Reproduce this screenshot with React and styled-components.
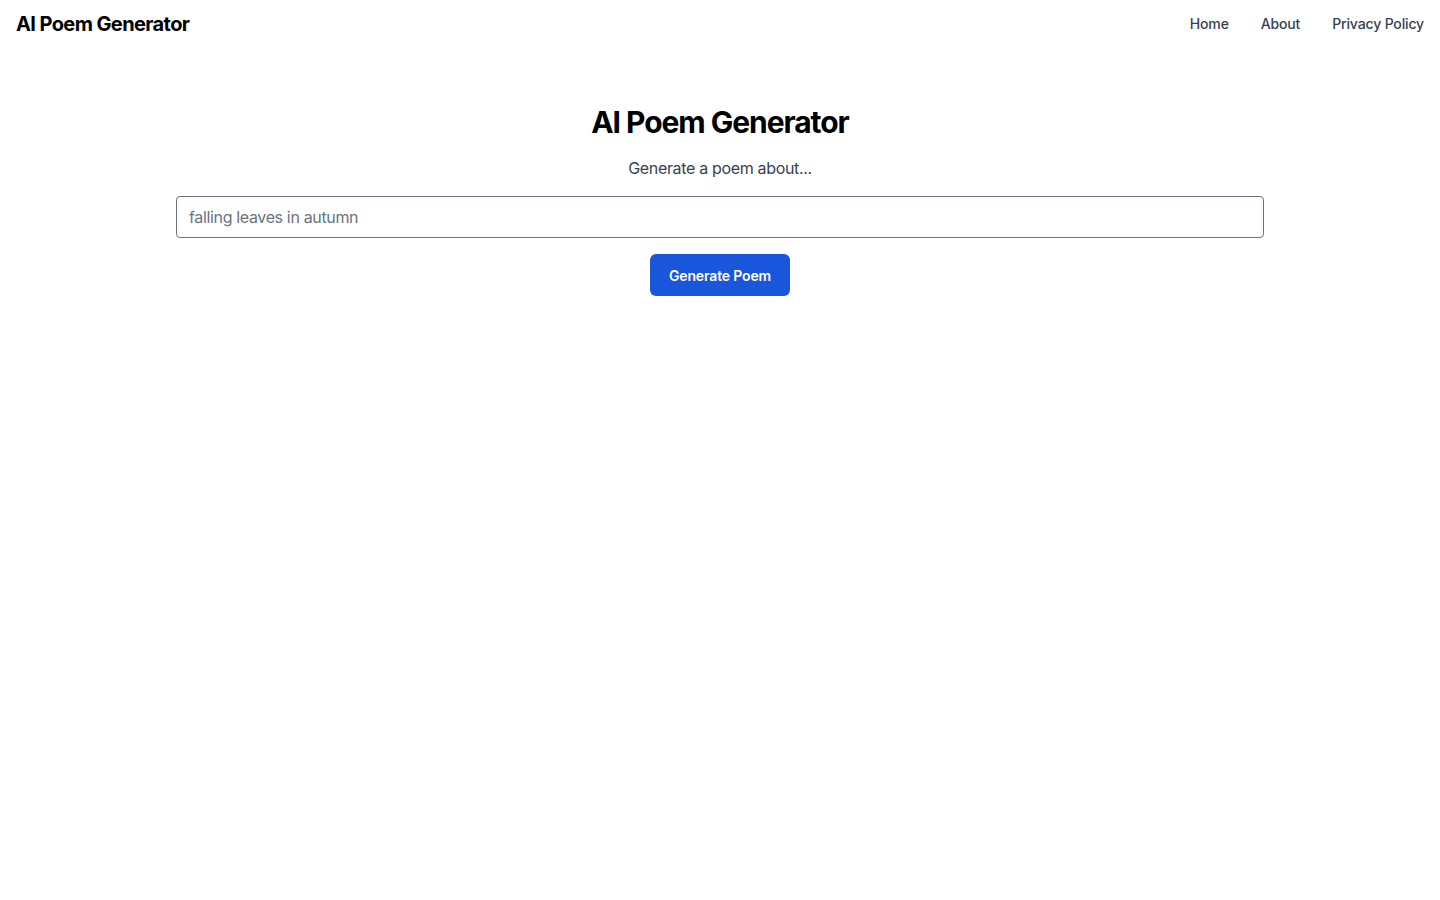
import styled, { createGlobalStyle } from "styled-components";

const GlobalStyle = createGlobalStyle`
  * { box-sizing: border-box; }
  body {
    margin: 0;
    background: #ffffff;
    font-family: Inter, "Liberation Sans", sans-serif;
    color: #000000;
  }
`;

export default function App() {
  return (
    <>
      <GlobalStyle />
      <Header>
        <Brand>AI Poem Generator</Brand>
        <Nav>
          <NavLink href="#">Home</NavLink>
          <NavLink href="#">About</NavLink>
          <NavLink href="#">Privacy Policy</NavLink>
        </Nav>
      </Header>
      <Main>
        <Title>AI Poem Generator</Title>
        <Subtitle>Generate a poem about...</Subtitle>
        <Form onSubmit={(e) => e.preventDefault()}>
          <PromptInput type="text" placeholder="falling leaves in autumn" />
          <SubmitButton type="submit">Generate Poem</SubmitButton>
        </Form>
      </Main>
    </>
  );
}

const Header = styled.header`
  display: flex;
  align-items: center;
  justify-content: space-between;
  height: 48px;
  padding: 0 16px;
`;

const Brand = styled.h1`
  margin: 0;
  font-size: 20px;
  line-height: 28px;
  font-weight: 700;
  letter-spacing: -0.6px;
`;

const Nav = styled.nav`
  display: flex;
  gap: 32px;
`;

const NavLink = styled.a`
  font-size: 14px;
  line-height: 20px;
  font-weight: 500;
  letter-spacing: -0.15px;
  color: #374151;
  text-decoration: none;
`;

const Main = styled.main`
  max-width: 1152px;
  margin: 0 auto;
  padding: 56px 32px 0;
  display: flex;
  flex-direction: column;
  align-items: center;
`;

const Title = styled.h2`
  margin: 0;
  font-size: 30px;
  line-height: 36px;
  font-weight: 700;
  letter-spacing: -1.05px;
`;

const Subtitle = styled.p`
  margin: 16px 0 0;
  font-size: 16px;
  line-height: 24px;
  letter-spacing: -0.33px;
  color: #374151;
`;

const Form = styled.form`
  width: 100%;
  margin-top: 16px;
  display: flex;
  flex-direction: column;
  align-items: center;
  gap: 16px;
`;

const PromptInput = styled.input`
  width: 100%;
  height: 42px;
  padding: 0 12px;
  border: 1px solid #6b7280;
  border-radius: 4px;
  font-family: inherit;
  font-size: 16px;
  letter-spacing: -0.35px;
  color: #111827;
  outline: none;

  &::placeholder {
    color: #6b7280;
  }
`;

const SubmitButton = styled.button`
  width: 140px;
  height: 42px;
  border: none;
  border-radius: 6px;
  background: #1a56db;
  color: #ffffff;
  font-family: inherit;
  font-size: 14px;
  font-weight: 600;
  letter-spacing: -0.15px;
  cursor: pointer;
`;
